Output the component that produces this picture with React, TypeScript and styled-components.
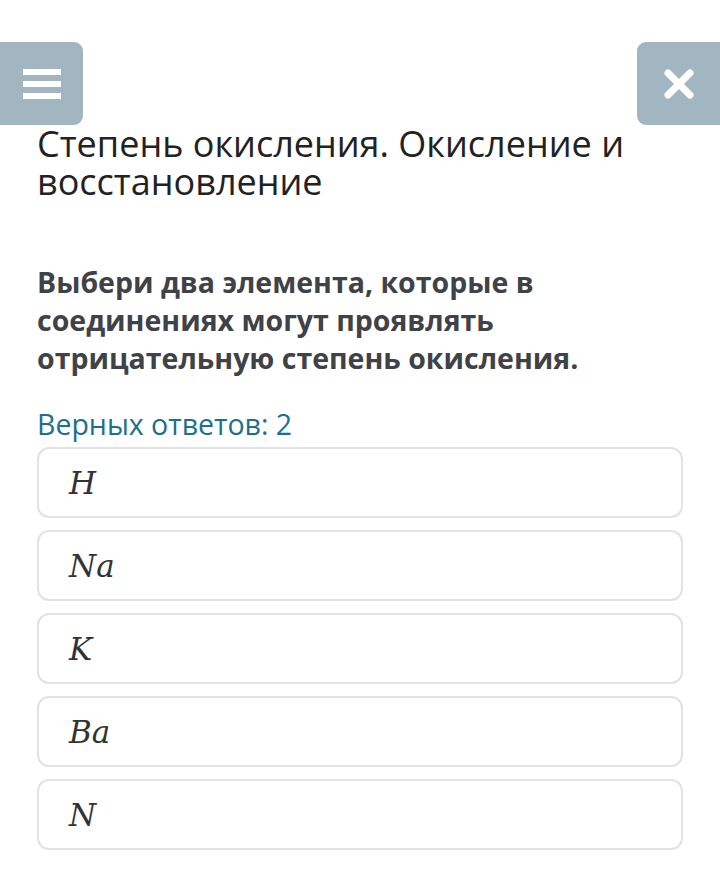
import React from "react";
import styled, {createGlobalStyle} from "styled-components";

const GlobalStyle = createGlobalStyle`
  body {
    margin: 0;
    background: #ffffff;
    font-family: "Open Sans", "Noto Sans", sans-serif;
  }
`;

const TopBar = styled.header`
  display: flex;
  justify-content: space-between;
  padding-top: 42px;
`;

const NavButton = styled.button<{ side: "left" | "right" }>`
  width: 83px;
  height: 83px;
  border: none;
  padding: 0;
  background: #a2b6c2;
  display: flex;
  align-items: center;
  justify-content: center;
  border-radius: ${props => props.side === "left" ? "0 9px 9px 0" : "9px 0 0 9px"};
`;

const Content = styled.main`
  padding: 0 37px;
`;

const Title = styled.h1`
  margin: 0;
  font-size: 36px;
  line-height: 38px;
  font-weight: 400;
  color: #222222;
`;

const Question = styled.p`
  margin: 62px 0 0;
  font-size: 28.5px;
  line-height: 38px;
  font-weight: 700;
  color: #3f4246;
`;

const AnswerCount = styled.div`
  margin-top: 30px;
  font-size: 28.5px;
  line-height: 34px;
  color: #1e6f8c;
`;

const Options = styled.ul`
  list-style: none;
  margin: 6px 0 0;
  padding: 0;
  display: flex;
  flex-direction: column;
  gap: 12px;
`;

const Option = styled.li`
  height: 71px;
  box-sizing: border-box;
  border: 2px solid #e2e2e2;
  border-radius: 12px;
  display: flex;
  align-items: center;
  padding-left: 30px;
  font-family: "DejaVu Serif", "Liberation Serif", serif;
  font-style: italic;
  font-size: 31px;
  color: #333333;
`;

const elements = ["H", "Na", "K", "Ba", "N"];

function MenuIcon() {
    return <svg width="38" height="30" viewBox="0 0 38 30">
        <rect x="0" y="0" width="38" height="6" fill="#fff"/>
        <rect x="0" y="12" width="38" height="6" fill="#fff"/>
        <rect x="0" y="24" width="38" height="6" fill="#fff"/>
    </svg>;
}

function CloseIcon() {
    return <svg width="30" height="30" viewBox="0 0 30 30">
        <path d="M4 4 L26 26 M26 4 L4 26" stroke="#fff" strokeWidth="7" strokeLinecap="round"/>
    </svg>;
}

function App() {
    return <>
        <GlobalStyle/>
        <TopBar>
            <NavButton side="left"><MenuIcon/></NavButton>
            <NavButton side="right"><CloseIcon/></NavButton>
        </TopBar>
        <Content>
            <Title>Степень окисления. Окисление и восстановление</Title>
            <Question>Выбери два элемента, которые в соединениях могут проявлять отрицательную степень окисления.</Question>
            <AnswerCount>Верных ответов: 2</AnswerCount>
            <Options>
                {elements.map(el => <Option key={el}>{el}</Option>)}
            </Options>
        </Content>
    </>;
}

export default App;
